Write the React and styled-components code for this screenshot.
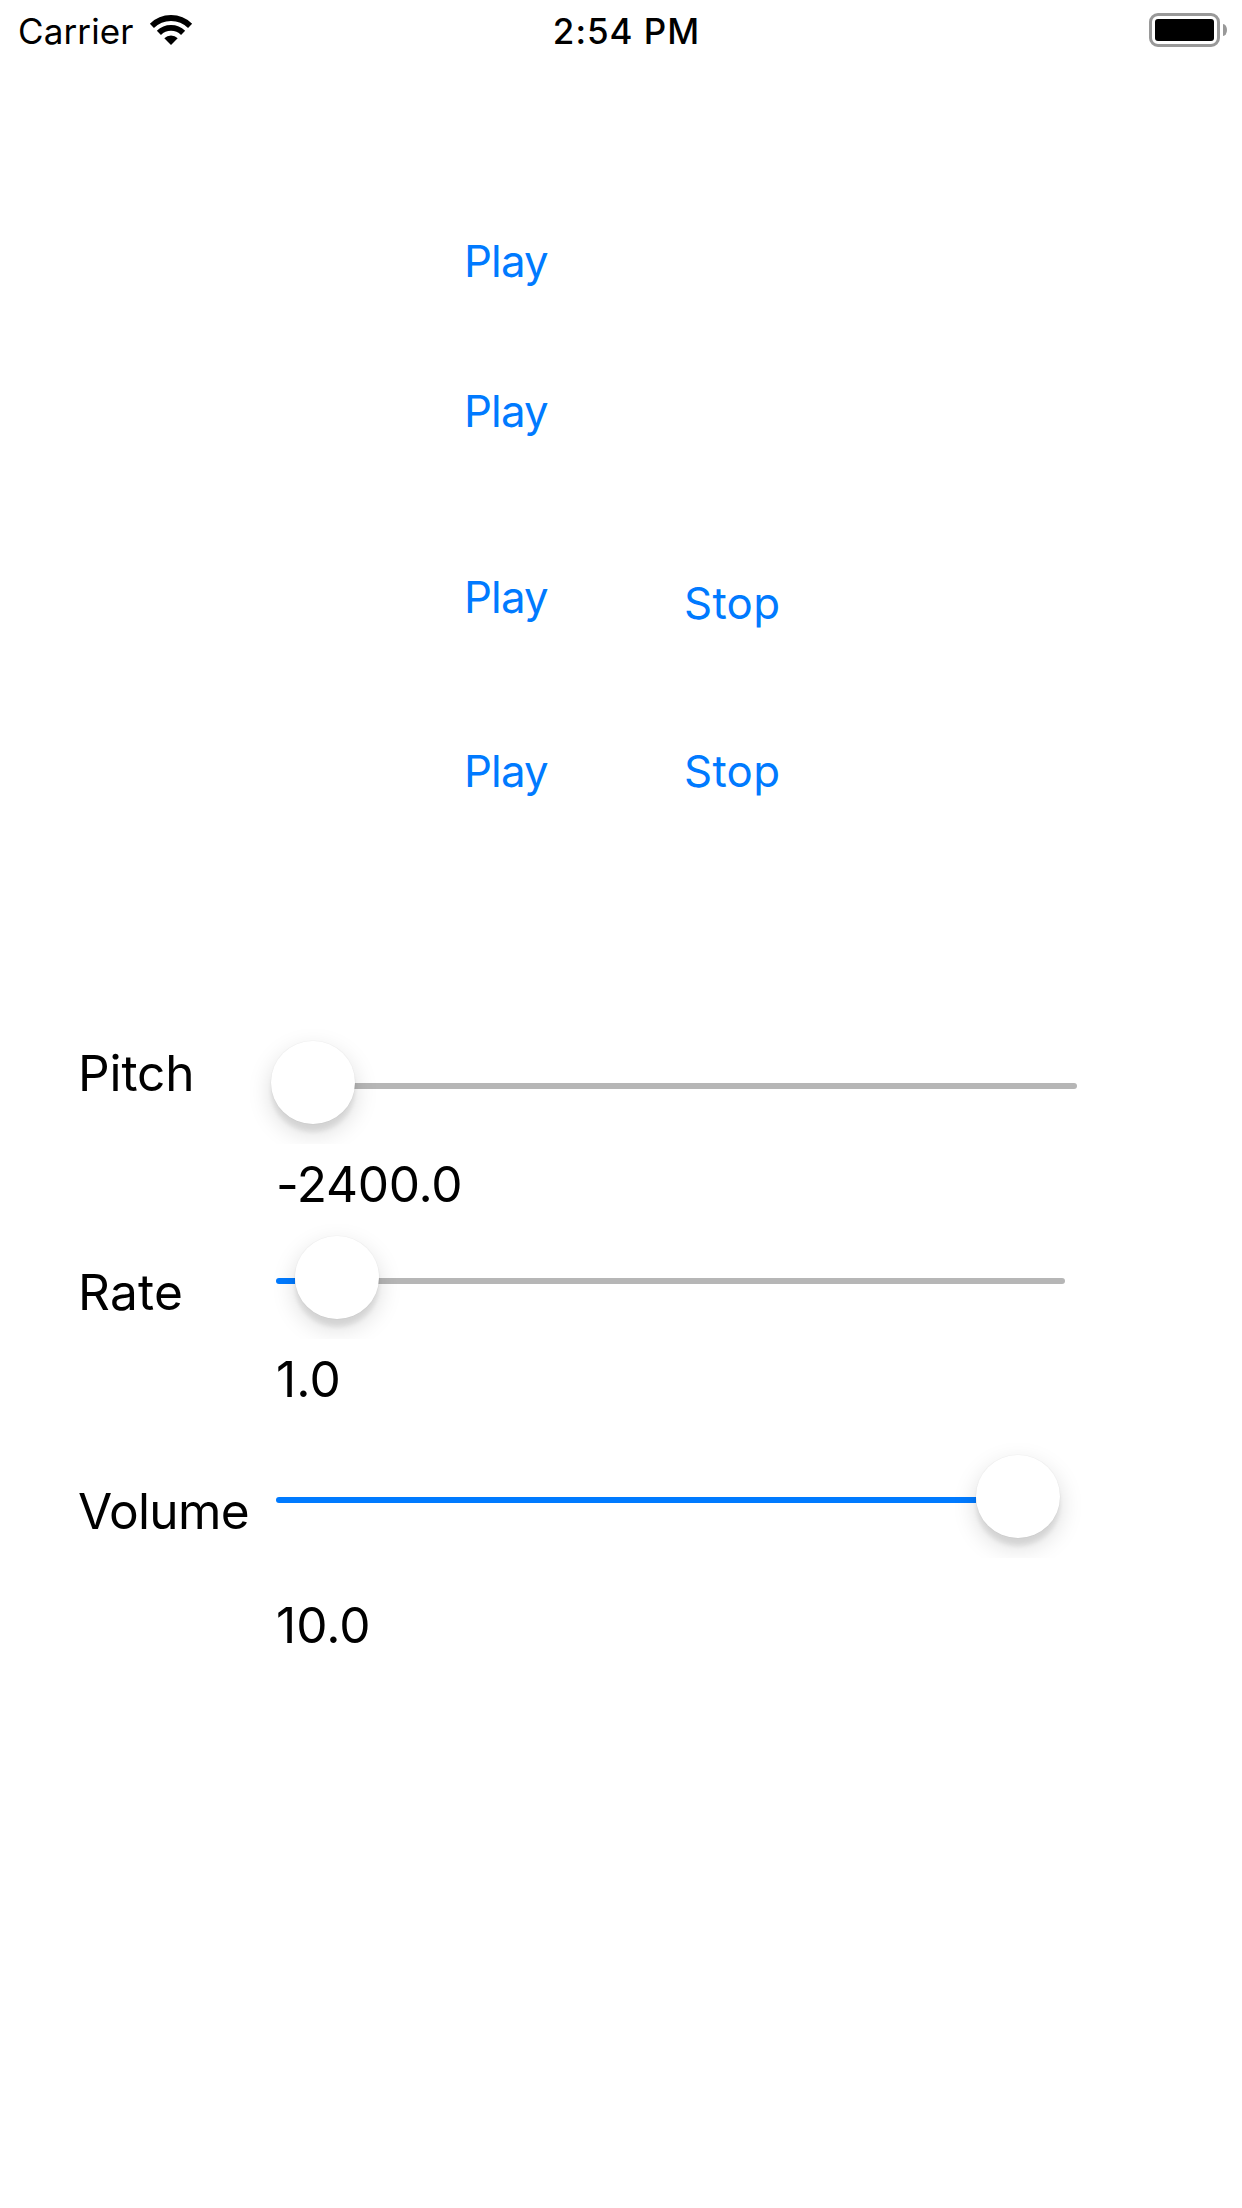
import React from 'react';
import styled, { createGlobalStyle } from 'styled-components';

const GlobalStyle = createGlobalStyle`
  *, *::before, *::after { box-sizing: border-box; }
  body { margin: 0; background: #fff; }
`;

const Screen = styled.main`
  display: flex;
  flex-direction: column;
  width: 1242px;
  height: 2208px;
  overflow: hidden;
  background: #fff;
  color: #000;
  font-family: Inter, Roboto, 'Liberation Sans', sans-serif;
`;

const StatusBar = styled.header`
  display: grid;
  grid-template-columns: 1fr auto 1fr;
  align-items: start;
  height: 60px;
  padding: 0 15px 0 18px;
  font-size: 35px;
  line-height: 62px;
`;

const CarrierGroup = styled.div`
  display: flex;
  gap: 15px;
  letter-spacing: 0.12px;
`;

const WifiIcon = styled.svg`
  display: block;
  width: 44px;
  height: 32px;
  margin-top: 14px;
`;

const Clock = styled.time`
  padding-left: 8px;
  font-weight: 500;
  letter-spacing: 0.97px;
`;

const Battery = styled.div`
  display: flex;
  justify-content: flex-end;
  align-items: center;
  gap: 3px;
  margin-top: 13px;
`;

const BatteryCase = styled.div`
  width: 71px;
  height: 34px;
  padding: 3px;
  border: 3px solid #999;
  border-radius: 9px;
`;

const BatteryLevel = styled.div`
  height: 100%;
  border-radius: 3px;
  background: #000;
`;

const BatteryTip = styled.div`
  width: 4px;
  height: 12px;
  border-radius: 0 4px 4px 0 / 0 6px 6px 0;
  background: #999;
`;

const Players = styled.section`
  display: flex;
  flex-direction: column;
  padding: 157px 0 0 464px;
`;

const PlayerRow = styled.div`
  display: grid;
  grid-template-columns: 220px 120px;
  align-items: start;
  height: 90px;
  margin-bottom: ${({ $after }) => $after}px;
`;

const TextButton = styled.button`
  justify-self: start;
  margin: ${({ $drop }) => $drop || 0}px 0 0;
  padding: 0;
  border: 0;
  background: none;
  color: #007aff;
  font: 400 43.8px/90px Inter, Roboto, 'Liberation Sans', sans-serif;
  letter-spacing: ${({ $tracking }) => $tracking}px;
`;

const Controls = styled.section`
  display: flex;
  flex-direction: column;
  padding: 223px 0 0 78px;
`;

const Control = styled.div`
  display: grid;
  grid-template-columns: 198px ${({ $width }) => $width}px;
  grid-template-rows: 84px auto;
  align-items: start;
  height: ${({ $height }) => $height}px;
`;

const Label = styled.label`
  margin-top: ${({ $drop }) => $drop}px;
  font-size: 49.6px;
  line-height: 63px;
  letter-spacing: ${({ $tracking }) => $tracking}px;
`;

const Value = styled.output`
  grid-column: 2;
  margin-top: ${({ $gap }) => $gap}px;
  font-size: 49.6px;
  line-height: 63px;
  letter-spacing: ${({ $tracking }) => $tracking}px;
`;

const Slider = styled.div`
  display: flex;
  align-items: center;
  height: 84px;
`;

const Track = styled.div`
  height: 6px;
  margin-top: 8px;
  background: ${({ $filled }) => ($filled ? '#007aff' : '#b6b6b6')};
  border-radius: ${({ $filled }) => ($filled ? '3px 0 0 3px' : '0 3px 3px 0')};
  flex: ${({ $length }) => ($length === undefined ? '1 1 0' : `0 0 ${$length}px`)};
`;

const Thumb = styled.div`
  flex: none;
  width: 84px;
  height: 83.5px;
  margin: 0.5px -1px 0 ${({ $overhang }) => -($overhang || 0)}px;
  border-radius: 50%;
  background: #fff;
  box-shadow:
    0 0 1px 0.5px rgba(0, 0, 0, 0.04),
    0 8px 4px rgba(0, 0, 0, 0.08),
    0 9px 24px rgba(0, 0, 0, 0.15);
  clip-path: inset(-24px -32px -20px -32px);
  z-index: 1;
`;

const players = [
  { after: 60 },
  { after: 96 },
  { after: 84, stop: true, drop: 6 },
  { after: 0, stop: true },
];

const controls = [
  {
    name: 'Pitch', value: '-2400.0', width: 801, height: 195, filled: 0, overhang: 5,
    labelDrop: 2, valueGap: 29, labelTracking: -0.15, valueTracking: -0.27,
  },
  {
    name: 'Rate', value: '1.0', width: 789, height: 219, filled: 19,
    labelDrop: 26, valueGap: 29, labelTracking: 0.25, valueTracking: 0.1,
  },
  {
    name: 'Volume', value: '10.0', width: 789, height: 230, filled: 700, full: true,
    labelDrop: 26, valueGap: 56, labelTracking: -0.7, valueTracking: 0,
  },
];

function Wifi() {
  return (
    <WifiIcon viewBox="0 0 44 32" aria-hidden="true">
      <g fill="none" stroke="#000" strokeWidth="5.8">
        <path d="M2.9 11.9a27.1 27.1 0 0 1 38.2 0" />
        <path d="M9.9 18.9a17.1 17.1 0 0 1 24.2 0" />
      </g>
      <path d="M15.3 24.3a9.5 9.5 0 0 1 13.4 0L22 31z" />
    </WifiIcon>
  );
}

export default function App() {
  return (
    <>
      <GlobalStyle />
      <Screen>
        <StatusBar>
          <CarrierGroup>
            <span>Carrier</span>
            <Wifi />
          </CarrierGroup>
          <Clock>2:54 PM</Clock>
          <Battery>
            <BatteryCase>
              <BatteryLevel />
            </BatteryCase>
            <BatteryTip />
          </Battery>
        </StatusBar>
        <Players>
          {players.map((p, i) => (
            <PlayerRow key={i} $after={p.after}>
              <TextButton $tracking={-0.85}>Play</TextButton>
              {p.stop && <TextButton $tracking={0.3} $drop={p.drop}>Stop</TextButton>}
            </PlayerRow>
          ))}
        </Players>
        <Controls>
          {controls.map((c) => (
            <Control key={c.name} $width={c.width} $height={c.height}>
              <Label $drop={c.labelDrop} $tracking={c.labelTracking}>{c.name}</Label>
              <Slider>
                {c.filled > 0 && <Track $filled $length={c.filled} />}
                <Thumb $overhang={c.overhang} />
                {!c.full && <Track />}
              </Slider>
              <Value $gap={c.valueGap} $tracking={c.valueTracking}>{c.value}</Value>
            </Control>
          ))}
        </Controls>
      </Screen>
    </>
  );
}
